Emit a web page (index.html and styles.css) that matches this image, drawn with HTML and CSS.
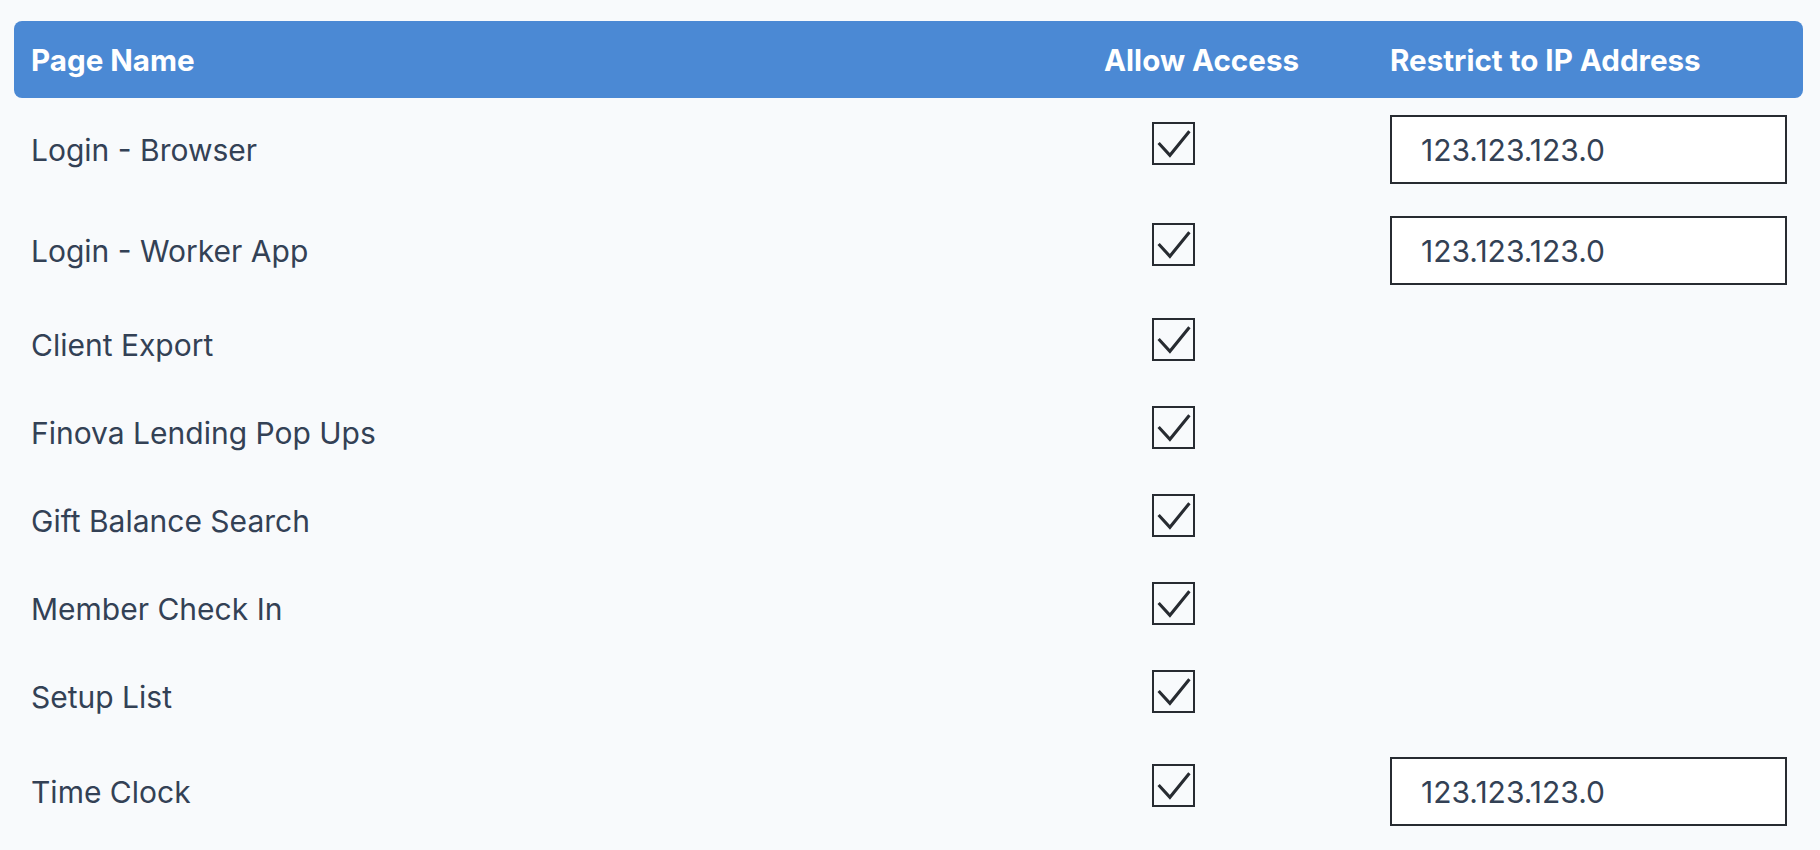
FILE: index.html
```html
<!DOCTYPE html>
<html lang="en">
<head>
  <meta charset="UTF-8" />
  <meta name="viewport" content="width=device-width, initial-scale=1.0" />
  <title>Page Access</title>
  <link rel="stylesheet" href="styles.css">
</head>
<body>
  <div class="access-table">
    <div class="row head">
      <div class="cell name">Page Name</div>
      <div class="cell allow">Allow Access</div>
      <div class="cell ip">Restrict to IP Address</div>
    </div>

    <div class="row">
      <div class="cell name">Login - Browser</div>
      <div class="cell allow">
        <span class="check"><svg viewBox="0 0 38 38"><path d="M4.5 18.5 L15.5 30.5 L34.5 7"/></svg></span>
      </div>
      <div class="cell ip"><input class="ip-input" type="text" value="123.123.123.0"></div>
    </div>

    <div class="row">
      <div class="cell name">Login - Worker App</div>
      <div class="cell allow">
        <span class="check"><svg viewBox="0 0 38 38"><path d="M4.5 18.5 L15.5 30.5 L34.5 7"/></svg></span>
      </div>
      <div class="cell ip"><input class="ip-input" type="text" value="123.123.123.0"></div>
    </div>

    <div class="row">
      <div class="cell name">Client Export</div>
      <div class="cell allow">
        <span class="check"><svg viewBox="0 0 38 38"><path d="M4.5 18.5 L15.5 30.5 L34.5 7"/></svg></span>
      </div>
      <div class="cell ip"></div>
    </div>

    <div class="row">
      <div class="cell name">Finova Lending Pop Ups</div>
      <div class="cell allow">
        <span class="check"><svg viewBox="0 0 38 38"><path d="M4.5 18.5 L15.5 30.5 L34.5 7"/></svg></span>
      </div>
      <div class="cell ip"></div>
    </div>

    <div class="row">
      <div class="cell name">Gift Balance Search</div>
      <div class="cell allow">
        <span class="check"><svg viewBox="0 0 38 38"><path d="M4.5 18.5 L15.5 30.5 L34.5 7"/></svg></span>
      </div>
      <div class="cell ip"></div>
    </div>

    <div class="row">
      <div class="cell name">Member Check In</div>
      <div class="cell allow">
        <span class="check"><svg viewBox="0 0 38 38"><path d="M4.5 18.5 L15.5 30.5 L34.5 7"/></svg></span>
      </div>
      <div class="cell ip"></div>
    </div>

    <div class="row">
      <div class="cell name">Setup List</div>
      <div class="cell allow">
        <span class="check"><svg viewBox="0 0 38 38"><path d="M4.5 18.5 L15.5 30.5 L34.5 7"/></svg></span>
      </div>
      <div class="cell ip"></div>
    </div>

    <div class="row">
      <div class="cell name">Time Clock</div>
      <div class="cell allow">
        <span class="check"><svg viewBox="0 0 38 38"><path d="M4.5 18.5 L15.5 30.5 L34.5 7"/></svg></span>
      </div>
      <div class="cell ip"><input class="ip-input" type="text" value="123.123.123.0"></div>
    </div>
  </div>
</body>
</html>
```

FILE: styles.css
```css
body {
  margin: 0;
  padding: 21px 17px 0 14px;
  background-color: #f8fafc;
  color: #334155;
  font-family: Inter, "Noto Sans", sans-serif;
  font-size: 30px;
}
.access-table {
  display: flex;
  flex-direction: column;
}
.row {
  display: grid;
  grid-template-columns: 1090px 286px 1fr;
  align-items: center;
  min-height: 88px;
  padding: 16px 0;
  box-sizing: border-box;
}
.row.head {
  min-height: 77px;
  padding: 0;
  margin-bottom: 1px;
  background-color: #4b89d4;
  border-radius: 8px;
  color: #fff;
  font-weight: 700;
  font-size: 29.6px;
}
.cell.name {
  padding-left: 17px;
}
.check {
  display: block;
  width: 43px;
  height: 43px;
  box-sizing: border-box;
  margin: 0 0 12px 48px;
  border: 2.5px solid #272b31;
}
.check svg {
  display: block;
  width: 100%;
  height: 100%;
  fill: none;
  stroke: #272b31;
  stroke-width: 3;
}
.ip-input {
  display: block;
  width: 397px;
  height: 69px;
  box-sizing: border-box;
  padding: 0 0 0 29px;
  border: 2.5px solid #272b31;
  border-radius: 0;
  background-color: #fff;
  color: #334155;
  font-family: inherit;
  font-size: 30px;
  outline: none;
}
```
